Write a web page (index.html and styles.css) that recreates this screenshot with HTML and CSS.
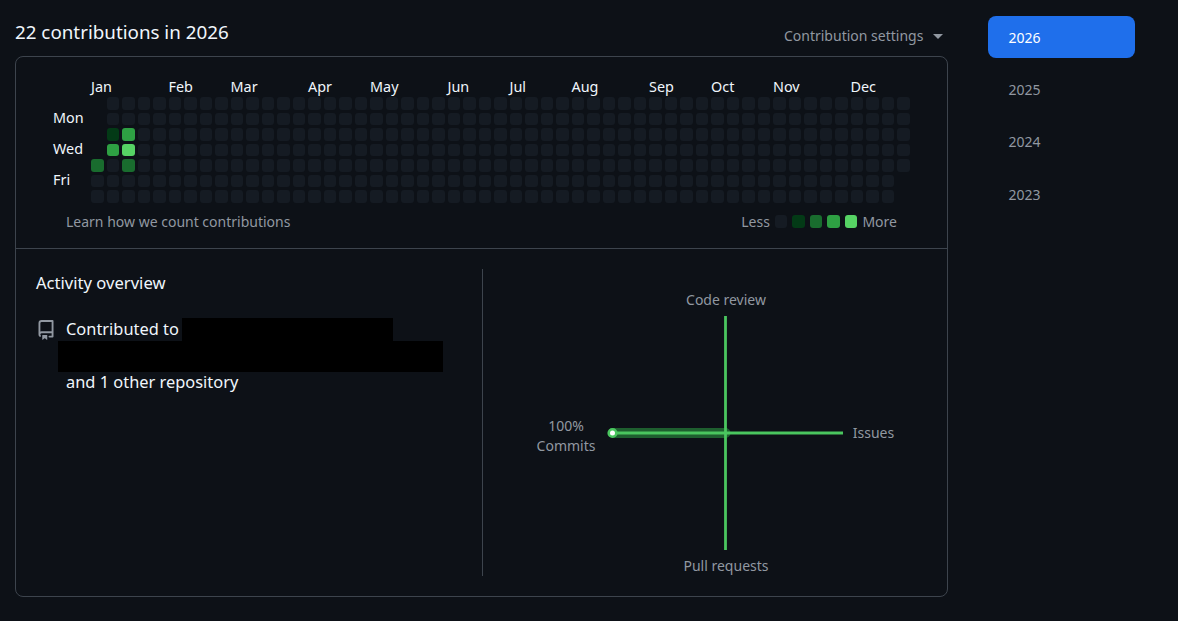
FILE: index.html
```html
<!DOCTYPE html>
<html lang="en">
<head>
    <meta charset="UTF-8">
    <meta name="viewport" content="width=device-width, initial-scale=1.0">
    <title>Contributions</title>
    <link rel="stylesheet" href="styles.css">
</head>
<body>
    <div class="page">
        <main class="contributions">
            <div class="top-row">
                <h2>22 contributions in 2026</h2>
                <div class="settings">Contribution settings <span class="caret"></span></div>
            </div>

            <div class="box">
                <section class="calendar">
                    <div class="graph" id="graph"></div>
                    <div class="graph-footer">
                        <span>Learn how we count contributions</span>
                        <div class="legend">
                            <span>Less</span>
                            <i class="cell l0"></i>
                            <i class="cell l1"></i>
                            <i class="cell l2"></i>
                            <i class="cell l3"></i>
                            <i class="cell l4"></i>
                            <span>More</span>
                        </div>
                    </div>
                </section>

                <section class="overview">
                    <div class="overview-left">
                        <h3>Activity overview</h3>
                        <div class="repos">
                            <svg class="repo-icon" viewBox="0 0 16 16" width="20" height="20">
                                <path fill="#9198a1" d="M2 2.5A2.5 2.5 0 0 1 4.5 0h8.75a.75.75 0 0 1 .75.75v12.5a.75.75 0 0 1-.75.75h-2.5a.75.75 0 0 1 0-1.5h1.75v-2h-8a1 1 0 0 0-.714 1.7.75.75 0 1 1-1.072 1.05A2.495 2.495 0 0 1 2 11.5Zm10.5-1h-8a1 1 0 0 0-1 1v6.708A2.486 2.486 0 0 1 4.5 9h8ZM5 12.25a.25.25 0 0 1 .25-.25h3.5a.25.25 0 0 1 .25.25v3.25a.25.25 0 0 1-.4.2l-1.45-1.087a.249.249 0 0 0-.3 0L5.4 15.7a.25.25 0 0 1-.4-.2Z"/>
                            </svg>
                            <div class="repo-text">
                                <div class="repo-line">Contributed to<span class="redact-short"></span></div>
                                <div class="redact-long"></div>
                                <div class="repo-last">and 1 other repository</div>
                            </div>
                        </div>
                    </div>
                    <div class="overview-right">
                        <svg class="radar" viewBox="0 0 464 308" width="464" height="308">
                            <text class="radar-label" x="243" y="36" text-anchor="middle">Code review</text>
                            <text class="radar-label" x="390.5" y="169" text-anchor="middle">Issues</text>
                            <text class="radar-label" x="243" y="302" text-anchor="middle">Pull requests</text>
                            <text class="radar-label" x="83" y="162" text-anchor="middle">100%</text>
                            <text class="radar-label" x="83" y="182" text-anchor="middle">Commits</text>
                            <path class="radar-area" d="M130 164H242.5V164H130Z"/>
                            <path class="radar-axis" d="M242.5 47V281M130 164H360"/>
                            <circle class="radar-dot" cx="129.5" cy="164" r="3.8"/>
                        </svg>
                    </div>
                </section>
            </div>
        </main>

        <nav class="years">
            <a class="year active">2026</a>
            <a class="year">2025</a>
            <a class="year">2024</a>
            <a class="year">2023</a>
        </nav>
    </div>

    <script src="script.js"></script>
</body>
</html>
```

FILE: styles.css
```css
* {
    box-sizing: border-box;
}
body {
    font-family: 'Noto Sans', 'Liberation Sans', sans-serif;
    background-color: #0d1117;
    color: #f0f6fc;
    margin: 0;
    padding: 0;
    height: 621px;
    overflow: hidden;
}
.page {
    display: flex;
    padding: 16px 0 0 15px;
}
.contributions {
    width: 933px;
}
.top-row {
    display: flex;
    justify-content: space-between;
    align-items: flex-end;
    height: 40px;
    padding-bottom: 10px;
}
.top-row h2 {
    margin: 0;
    font-size: 18.8px;
    font-weight: 400;
    line-height: 30px;
    position: relative;
    top: 1px;
}
.settings {
    font-size: 14px;
    color: #9198a1;
    line-height: 20px;
    padding-right: 5px;
}
.caret {
    display: inline-block;
    border-left: 5px solid transparent;
    border-right: 5px solid transparent;
    border-top: 5px solid #9198a1;
    margin-left: 6px;
    vertical-align: 2px;
}
.box {
    border: 1px solid #3d444d;
    border-radius: 8px;
    height: 541px;
}
.calendar {
    height: 192px;
    border-bottom: 1px solid #3d444d;
    padding: 20px 0 0 37px;
}
.graph {
    display: grid;
    grid-template-columns: 38px repeat(53, 12.5px);
    grid-template-rows: 17px repeat(7, 12.5px);
    column-gap: 3px;
    row-gap: 3px;
    margin-left: -3px;
}
.month {
    font-size: 14.4px;
    line-height: 20px;
    white-space: nowrap;
    grid-row: 1;
}
.weekday {
    grid-column: 1;
    font-size: 14.4px;
    line-height: 9.5px;
    padding-left: 3px;
}
.cell {
    display: block;
    width: 12.5px;
    height: 12.5px;
    border-radius: 3px;
}
.l0 { background-color: #151b23; }
.l1 { background-color: #033a16; }
.l2 { background-color: #196c2e; }
.l3 { background-color: #2ea043; }
.l4 { background-color: #56d364; }
.graph-footer {
    display: flex;
    justify-content: space-between;
    align-items: center;
    font-size: 14px;
    line-height: 20px;
    color: #9198a1;
    margin-top: 9px;
    padding: 0 50px 0 13px;
}
.legend {
    display: flex;
    align-items: center;
    gap: 5px;
}
.overview {
    display: flex;
    padding-top: 20px;
}
.overview-left {
    width: 467px;
    height: 307px;
    border-right: 1px solid #3d444d;
    padding-left: 20px;
}
.overview-left h3 {
    margin: 0;
    font-size: 16.6px;
    font-weight: 400;
    line-height: 27px;
}
.repos {
    position: relative;
    padding-left: 30px;
    margin-top: 22px;
    font-size: 16.4px;
}
.repo-icon {
    position: absolute;
    left: -0.5px;
    top: 2px;
}
.repo-line {
    display: flex;
    height: 23px;
    line-height: 22px;
    white-space: pre;
}
.redact-short {
    display: block;
    width: 211px;
    height: 23px;
    background: #000;
    margin-left: 3px;
}
.redact-long {
    width: 385px;
    height: 31px;
    background: #000;
    margin-left: -8px;
}
.repo-last {
    line-height: 20px;
}
.radar {
    display: block;
}
.radar-label {
    font-size: 14px;
    fill: #9198a1;
}
.radar-area {
    fill: none;
    stroke: #2ea043;
    stroke-opacity: 0.55;
    stroke-width: 10px;
    stroke-linejoin: round;
}
.radar-axis {
    fill: none;
    stroke: #4ac65f;
    stroke-width: 2.8px;
}
.radar-dot {
    fill: #fff;
    stroke: #4ac65f;
    stroke-width: 2.6px;
}
.years {
    display: flex;
    flex-direction: column;
    width: 147px;
    margin-left: 40px;
    gap: 10.5px;
}
.year {
    display: block;
    height: 42px;
    line-height: 42px;
    padding-left: 20.5px;
    font-size: 14px;
    color: #9198a1;
    border-radius: 8px;
}
.year.active {
    line-height: 43px;
    background-color: #1f6feb;
    color: #fff;
}
```

FILE: script.js
```js
const graph = document.getElementById("graph");

const months = [
    ["Jan", 0], ["Feb", 5], ["Mar", 9], ["Apr", 14], ["May", 18], ["Jun", 23],
    ["Jul", 27], ["Aug", 31], ["Sep", 36], ["Oct", 40], ["Nov", 44], ["Dec", 49]
];
const weekdays = { 1: "Mon", 3: "Wed", 5: "Fri" };
const levels = { "0-4": 2, "1-2": 1, "1-3": 3, "2-2": 3, "2-3": 4, "2-4": 2 };

months.forEach(([name, week]) => {
    const label = document.createElement("div");
    label.className = "month";
    label.textContent = name;
    label.style.gridColumn = `${week + 2} / span 4`;
    graph.appendChild(label);
});

Object.keys(weekdays).forEach(day => {
    const label = document.createElement("div");
    label.className = "weekday";
    label.textContent = weekdays[day];
    label.style.gridRow = Number(day) + 2;
    graph.appendChild(label);
});

for (let week = 0; week < 53; week++) {
    for (let day = 0; day < 7; day++) {
        if ((week === 0 && day < 4) || (week === 52 && day > 4)) continue;
        const cell = document.createElement("i");
        cell.className = `cell l${levels[`${week}-${day}`] || 0}`;
        cell.style.gridColumn = week + 2;
        cell.style.gridRow = day + 2;
        graph.appendChild(cell);
    }
}
```
